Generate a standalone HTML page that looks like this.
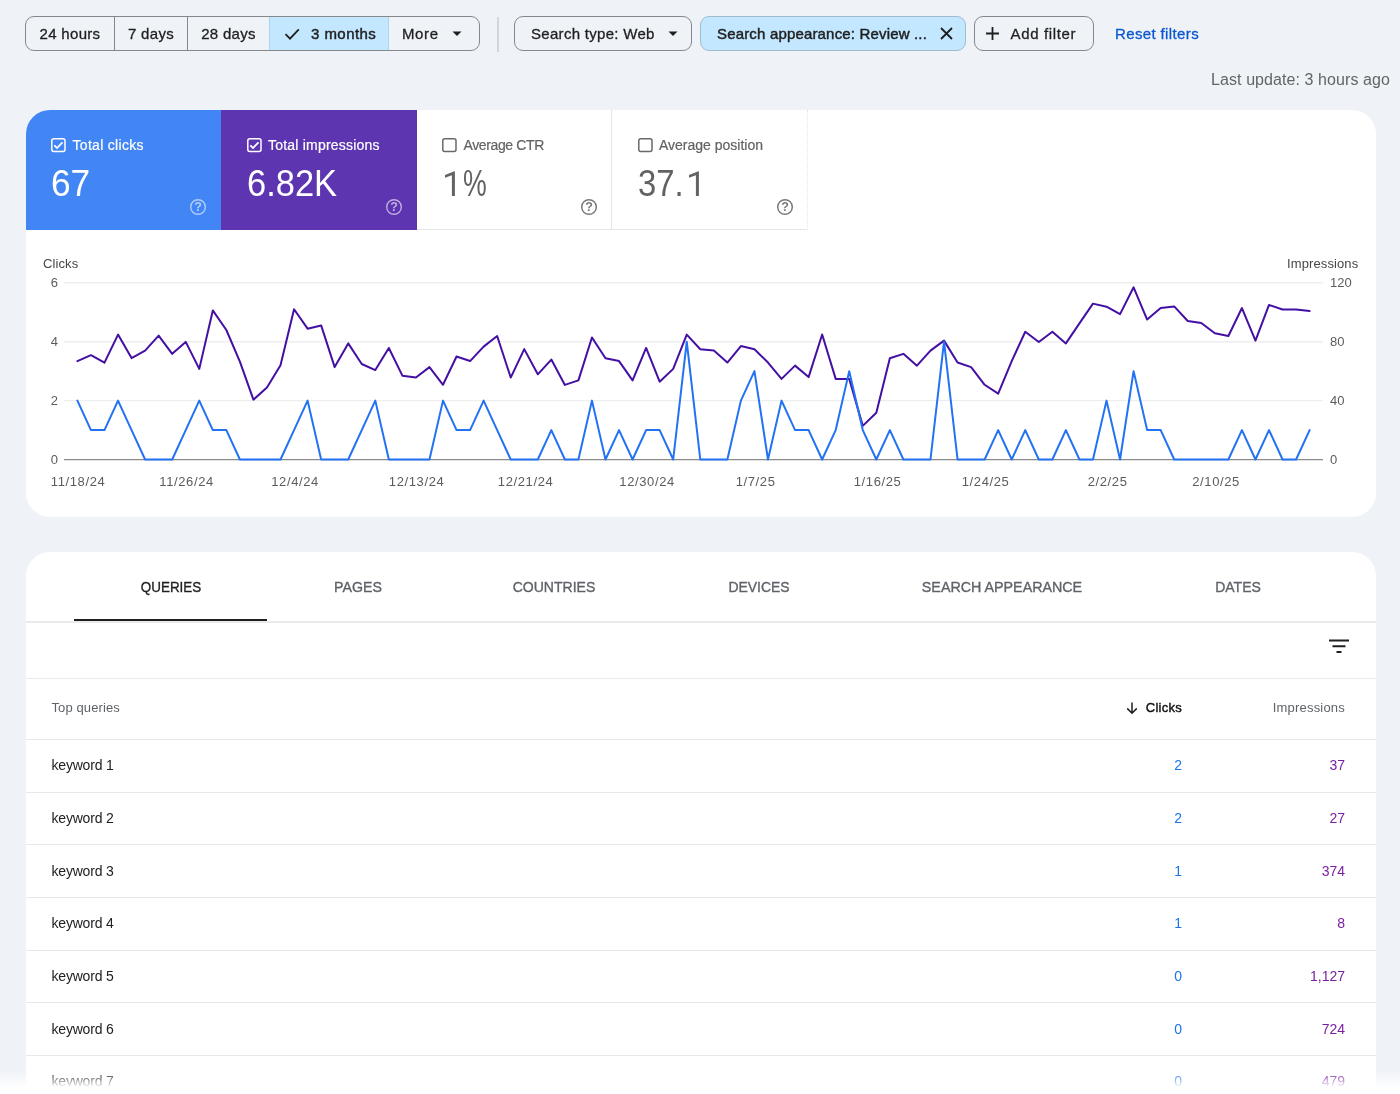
<!DOCTYPE html>
<html><head><meta charset="utf-8">
<style>
*{box-sizing:border-box;margin:0;padding:0}
html,body{width:1400px;height:1094px;overflow:hidden}
body{background:#eff3f8;font-family:"Liberation Sans",sans-serif;position:relative;color:#1f1f1f}
.abs{position:absolute}
.t{position:absolute;white-space:nowrap;line-height:1}
/* top bar */
.grp{position:absolute;left:25px;top:16px;width:454.8px;height:35px;border:1px solid #85888a;border-radius:9px;overflow:hidden;background:#eff3f8}
.seg{position:absolute;top:0;height:33px;border-left:1px solid #85888a;font-size:15px;line-height:33px;letter-spacing:.3px;-webkit-text-stroke:.3px #1f1f1f;text-align:center;color:#1f1f1f}
.chip{position:absolute;top:16px;height:35px;border:1px solid #85888a;border-radius:9px;font-size:15px;line-height:33px;letter-spacing:.3px;-webkit-text-stroke:.3px #1f1f1f;color:#1f1f1f;white-space:nowrap}
/* cards */
.card{position:absolute;left:25.5px;width:1350.5px;background:#fff;border-radius:24px;overflow:hidden}
.tile{position:absolute;top:0;height:120px;width:195.5px}
.tile .lbl{position:absolute;left:47px;top:26.5px;font-size:14px;line-height:16px;white-space:nowrap;-webkit-text-stroke:.2px currentColor}
.tile .num{position:absolute;left:25.5px;top:52.5px;font-size:36px;line-height:42px;white-space:nowrap;transform-origin:left center}
.ax{font-size:13px;fill:#5c5c5c;font-family:"Liberation Sans",sans-serif}
.ax .d{letter-spacing:.62px}
.tab{position:absolute;top:0;height:69px;line-height:69px;font-size:15px;color:#5f6368;text-align:center;white-space:nowrap;-webkit-text-stroke:.35px currentColor}
.row{position:absolute;left:0;width:1350.5px;border-top:1px solid #e6e8ea;height:53px}
.row .k{position:absolute;left:26px;top:17.2px;font-size:14px;line-height:16px;color:#202124;letter-spacing:-.2px}
.row .c{position:absolute;right:194px;top:17.2px;font-size:14px;line-height:16px;color:#1a73e8}
.row .i{position:absolute;right:31px;top:17.2px;font-size:14px;line-height:16px;color:#7b1fa2}
#w{position:absolute;left:0;top:0;width:1400px;height:1094px;will-change:transform;transform:translateZ(0)}
.gs{letter-spacing:.3px;-webkit-text-stroke:.3px #1f1f1f}
</style></head><body><div id="w">

<!-- date range group -->
<div class="grp">
  <div class="seg" style="left:0;width:88px;border-left:none">24 hours</div>
  <div class="seg" style="left:88px;width:73px">7 days</div>
  <div class="seg" style="left:161px;width:82px">28 days</div>
  <div class="seg" style="left:243px;width:118.5px;background:#c2e7ff;border-left-color:#a9d3ee;-webkit-text-stroke:.45px #1f1f1f;letter-spacing:.45px">
    <svg class="abs" style="left:14.3px;top:9px" width="17" height="15" viewBox="0 0 17 15"><path d="M1.5 8.2 L6 12.6 L14.8 3.4" fill="none" stroke="#1f1f1f" stroke-width="1.8"/></svg>
    <span style="position:absolute;left:41px;top:0">3 months</span>
  </div>
  <div class="seg" style="left:361.5px;width:93px;border-left-color:#a9d3ee">
    <span style="position:absolute;left:13.5px;top:0;letter-spacing:.6px">More</span>
    <svg class="abs" style="left:63.2px;top:14px" width="10" height="6" viewBox="0 0 10 6"><path d="M0.5 0.5 L9.5 0.5 L5 5 Z" fill="#1f1f1f"/></svg>
  </div>
</div>
<div class="abs" style="left:497px;top:17px;width:1.5px;height:35px;background:#d3d6d9"></div>

<div class="chip" style="left:514px;width:178px">
  <span style="position:absolute;left:16px;top:0">Search type: Web</span>
  <svg class="abs" style="left:153px;top:14px" width="10" height="6" viewBox="0 0 10 6"><path d="M0.5 0.5 L9.5 0.5 L5 5 Z" fill="#1f1f1f"/></svg>
</div>
<div class="chip" style="left:700px;width:266px;background:#c2e7ff;border-color:#9fbccf;-webkit-text-stroke:.45px #1f1f1f">
  <span style="position:absolute;left:16px;top:0;letter-spacing:.17px">Search appearance: Review ...</span>
  <svg class="abs" style="left:239px;top:10px" width="13" height="13" viewBox="0 0 13 13"><path d="M1 1 L12 12 M12 1 L1 12" fill="none" stroke="#1f1f1f" stroke-width="1.8"/></svg>
</div>
<div class="chip" style="left:973.5px;width:120px">
  <svg class="abs" style="left:10px;top:9px" width="15" height="15" viewBox="0 0 15 15"><path d="M7.5 1 V14 M1 7.5 H14" fill="none" stroke="#1f1f1f" stroke-width="1.8"/></svg>
  <span style="position:absolute;left:36px;top:0;letter-spacing:.65px">Add filter</span>
</div>
<div class="t" style="left:1115px;top:25.8px;font-size:15px;color:#0b57d0;letter-spacing:.37px;-webkit-text-stroke:.3px #0b57d0">Reset filters</div>
<div class="t" style="right:10px;top:71.5px;font-size:16px;color:#636466;letter-spacing:.08px">Last update: 3 hours ago</div>

<!-- CARD 1 -->
<div class="card" style="top:110px;height:407px">
  <div class="tile" style="left:0;background:#4285f4;color:#fff">
    <svg class="abs" style="left:25.5px;top:28px" width="15" height="15" viewBox="0 0 15 15"><rect x=".8" y=".8" width="13.2" height="12.8" rx="2" fill="none" stroke="#fff" stroke-width="1.5"/><path d="M3.3 7.3 L6 10 L11.5 4.3" fill="none" stroke="#fff" stroke-width="1.8"/></svg>
    <div class="lbl" style="letter-spacing:.3px">Total clicks</div>
    <div class="num" style="transform:scaleX(.98)">67</div>
    <svg class="abs" style="left:163.6px;top:88.4px" width="18" height="18" viewBox="0 0 18 18"><circle cx="9" cy="9" r="7.3" fill="none" stroke="#fff" stroke-opacity=".6" stroke-width="1.4"/><text x="9" y="13.4" font-size="12.5" font-weight="bold" text-anchor="middle" fill="#fff" fill-opacity=".6" font-family="Liberation Sans">?</text></svg>
  </div>
  <div class="tile" style="left:195.5px;background:#5e35b1;color:#fff">
    <svg class="abs" style="left:25.5px;top:28px" width="15" height="15" viewBox="0 0 15 15"><rect x=".8" y=".8" width="13.2" height="12.8" rx="2" fill="none" stroke="#fff" stroke-width="1.5"/><path d="M3.3 7.3 L6 10 L11.5 4.3" fill="none" stroke="#fff" stroke-width="1.8"/></svg>
    <div class="lbl" style="letter-spacing:.21px">Total impressions</div>
    <div class="num" style="transform:scaleX(.958)">6.82K</div>
    <svg class="abs" style="left:163.6px;top:88.4px" width="18" height="18" viewBox="0 0 18 18"><circle cx="9" cy="9" r="7.3" fill="none" stroke="#fff" stroke-opacity=".6" stroke-width="1.4"/><text x="9" y="13.4" font-size="12.5" font-weight="bold" text-anchor="middle" fill="#fff" fill-opacity=".6" font-family="Liberation Sans">?</text></svg>
  </div>
  <div class="tile" style="left:391px;background:#fff;color:#626262;border-right:1px solid #e4e6e8;border-bottom:1px solid #e4e6e8">
    <svg class="abs" style="left:25.5px;top:28px" width="15" height="15" viewBox="0 0 15 15"><rect x=".8" y=".8" width="13.2" height="12.8" rx="2" fill="none" stroke="#686868" stroke-width="1.5"/></svg>
    <div class="lbl" style="letter-spacing:-.38px">Average CTR</div>
    <svg class="abs" style="left:27.6px;top:61px" width="12" height="26" viewBox="0 0 12 26"><path d="M10.9 0.3 V25 H7.9 V4.2 L1 6.8 V4 L10.4 0.3 Z" fill="#636363"/></svg><div class="num" style="transform:scaleX(.74);left:46.6px">%</div>
    <svg class="abs" style="left:163.6px;top:88.4px" width="18" height="18" viewBox="0 0 18 18"><circle cx="9" cy="9" r="7.3" fill="none" stroke="#7a7a7a" stroke-width="1.5"/><text x="9" y="13.4" font-size="12.5" font-weight="bold" text-anchor="middle" fill="#7a7a7a" font-family="Liberation Sans">?</text></svg>
  </div>
  <div class="tile" style="left:586.5px;background:#fff;color:#626262;border-right:1px dotted #e4e6e8;border-bottom:1px solid #e4e6e8">
    <svg class="abs" style="left:25.5px;top:28px" width="15" height="15" viewBox="0 0 15 15"><rect x=".8" y=".8" width="13.2" height="12.8" rx="2" fill="none" stroke="#686868" stroke-width="1.5"/></svg>
    <div class="lbl">Average position</div>
    <div class="num" style="transform:scaleX(.912)">37.</div><svg class="abs" style="left:75.8px;top:61px" width="12" height="26" viewBox="0 0 12 26"><path d="M10.9 0.3 V25 H7.9 V4.2 L1 6.8 V4 L10.4 0.3 Z" fill="#636363"/></svg>
    <svg class="abs" style="left:163.6px;top:88.4px" width="18" height="18" viewBox="0 0 18 18"><circle cx="9" cy="9" r="7.3" fill="none" stroke="#7a7a7a" stroke-width="1.5"/><text x="9" y="13.4" font-size="12.5" font-weight="bold" text-anchor="middle" fill="#7a7a7a" font-family="Liberation Sans">?</text></svg>
  </div>
</div>

<!-- chart overlay in page coords -->
<svg class="abs" style="left:0;top:0" width="1400" height="520" viewBox="0 0 1400 520">
  <g stroke="#eeeeee" stroke-width="1.4">
    <line x1="64" x2="1323" y1="282.8" y2="282.8"/>
    <line x1="64" x2="1323" y1="341.7" y2="341.7"/>
    <line x1="64" x2="1323" y1="400.6" y2="400.6"/>
  </g>
  <line x1="64" x2="1323" y1="459.6" y2="459.6" stroke="#8a8a8a" stroke-width="1.2"/>
  <polyline fill="none" stroke="#4410a3" stroke-width="2" stroke-linejoin="round" stroke-linecap="round" points="77.40,361.21 90.94,355.17 104.48,362.68 118.02,334.56 131.56,358.12 145.11,350.61 158.65,335.59 172.19,353.85 185.73,341.92 199.27,368.87 212.81,310.41 226.35,329.99 239.89,361.65 253.43,399.64 266.97,387.42 280.51,365.19 294.06,309.23 307.60,328.67 321.14,325.43 334.68,367.10 348.22,343.39 361.76,364.01 375.30,370.05 388.84,347.96 402.38,375.64 415.93,377.56 429.47,367.10 443.01,384.77 456.55,356.50 470.09,361.06 483.63,346.63 497.17,336.03 510.71,377.56 524.25,349.14 537.79,374.32 551.34,359.59 564.88,384.92 578.42,380.35 591.96,337.50 605.50,358.27 619.04,361.06 632.58,380.35 646.12,347.96 659.66,381.68 673.20,368.87 686.75,334.56 700.29,349.28 713.83,350.61 727.37,362.54 740.91,346.04 754.45,349.28 767.99,362.54 781.53,378.88 795.07,365.63 808.61,377.11 822.15,334.56 835.70,378.88 849.24,378.88 862.78,425.85 876.32,412.75 889.86,358.27 903.40,353.85 916.94,365.63 930.48,350.61 944.02,340.60 957.57,362.54 971.11,367.10 984.65,384.77 998.19,393.61 1011.73,361.06 1025.27,331.76 1038.81,342.07 1052.35,331.76 1065.89,343.39 1079.43,323.37 1092.98,303.64 1106.52,306.73 1120.06,314.09 1133.60,287.29 1147.14,319.54 1160.68,308.05 1174.22,306.43 1187.76,321.01 1201.30,322.93 1214.84,333.23 1228.39,336.03 1241.93,308.05 1255.47,340.60 1269.01,304.96 1282.55,309.53 1296.09,309.53 1309.63,311.00"/>
  <polyline fill="none" stroke="#2272f3" stroke-width="2" stroke-linejoin="round" stroke-linecap="round" points="77.40,400.60 90.94,430.05 104.48,430.05 118.02,400.60 131.56,430.05 145.11,459.50 158.65,459.50 172.19,459.50 185.73,430.05 199.27,400.60 212.81,430.05 226.35,430.05 239.89,459.50 253.43,459.50 266.97,459.50 280.51,459.50 294.06,430.05 307.60,400.60 321.14,459.50 334.68,459.50 348.22,459.50 361.76,430.05 375.30,400.60 388.84,459.50 402.38,459.50 415.93,459.50 429.47,459.50 443.01,400.60 456.55,430.05 470.09,430.05 483.63,400.60 497.17,430.05 510.71,459.50 524.25,459.50 537.79,459.50 551.34,430.05 564.88,459.50 578.42,459.50 591.96,400.60 605.50,459.50 619.04,430.05 632.58,459.50 646.12,430.05 659.66,430.05 673.20,459.50 686.75,341.70 700.29,459.50 713.83,459.50 727.37,459.50 740.91,400.60 754.45,371.15 767.99,459.50 781.53,400.60 795.07,430.05 808.61,430.05 822.15,459.50 835.70,430.05 849.24,371.15 862.78,430.05 876.32,459.50 889.86,430.05 903.40,459.50 916.94,459.50 930.48,459.50 944.02,341.70 957.57,459.50 971.11,459.50 984.65,459.50 998.19,430.05 1011.73,459.50 1025.27,430.05 1038.81,459.50 1052.35,459.50 1065.89,430.05 1079.43,459.50 1092.98,459.50 1106.52,400.60 1120.06,459.50 1133.60,371.15 1147.14,430.05 1160.68,430.05 1174.22,459.50 1187.76,459.50 1201.30,459.50 1214.84,459.50 1228.39,459.50 1241.93,430.05 1255.47,459.50 1269.01,430.05 1282.55,459.50 1296.09,459.50 1309.63,430.05"/>
  <g class="ax">
    <text x="43" y="268" fill="#474747" letter-spacing=".1">Clicks</text>
    <text x="1358.3" y="268" text-anchor="end" fill="#474747" letter-spacing=".1">Impressions</text>
    <text x="58" y="287.4" text-anchor="end">6</text>
    <text x="58" y="346.3" text-anchor="end">4</text>
    <text x="58" y="405.2" text-anchor="end">2</text>
    <text x="58" y="464.2" text-anchor="end">0</text>
    <text x="1330" y="287.4">120</text>
    <text x="1330" y="346.3">80</text>
    <text x="1330" y="405.2">40</text>
    <text x="1330" y="464.2">0</text>
    <g text-anchor="middle" class="d" transform="translate(.6,0)">
      <text x="77.5" y="486.3">11/18/24</text>
      <text x="186" y="486.3">11/26/24</text>
      <text x="294.5" y="486.3">12/4/24</text>
      <text x="416" y="486.3">12/13/24</text>
      <text x="525" y="486.3">12/21/24</text>
      <text x="646.5" y="486.3">12/30/24</text>
      <text x="755" y="486.3">1/7/25</text>
      <text x="877" y="486.3">1/16/25</text>
      <text x="985" y="486.3">1/24/25</text>
      <text x="1107" y="486.3">2/2/25</text>
      <text x="1215.5" y="486.3">2/10/25</text>
    </g>
  </g>
</svg>

<!-- CARD 2 -->
<div class="card" style="top:552px;height:560px">
  <div class="tab" style="left:145px;color:#1f1f1f;transform:translateX(-50%) scaleX(.895)">QUERIES</div>
  <div class="tab" style="left:332px;transform:translateX(-50%) scaleX(.945)">PAGES</div>
  <div class="tab" style="left:528.6px;transform:translateX(-50%) scaleX(.935)">COUNTRIES</div>
  <div class="tab" style="left:733.5px;transform:translateX(-50%) scaleX(.93)">DEVICES</div>
  <div class="tab" style="left:976.5px;transform:translateX(-50%) scaleX(.952)">SEARCH APPEARANCE</div>
  <div class="tab" style="left:1212px;transform:translateX(-50%) scaleX(.935)">DATES</div>
  <div class="abs" style="left:48.5px;top:67px;width:193px;height:2.5px;background:#1f1f1f"></div>
  <div class="abs" style="left:0;top:69px;width:1350.5px;height:1.5px;background:#e8eaed"></div>
  <!-- filter icon -->
  <svg class="abs" style="left:1302px;top:87px" width="22" height="16" viewBox="0 0 22 16"><path d="M1 1.5 H21 M4.5 7.2 H17.5 M8.5 13 H13.5" stroke="#1f1f1f" stroke-width="2" fill="none"/></svg>
  <div class="abs" style="left:0;top:125.5px;width:1350.5px;height:1.5px;background:#e8eaed"></div>
  <div class="t" style="left:26px;top:149px;font-size:13px;letter-spacing:.1px;color:#5f6368">Top queries</div>
  <svg class="abs" style="left:1099px;top:149px" width="14" height="14" viewBox="0 0 14 14"><path d="M7 1.5 V12 M2.2 7.4 L7 12.2 L11.8 7.4" fill="none" stroke="#1f1f1f" stroke-width="1.5"/></svg>
  <div class="t" style="right:194px;top:149px;font-size:13px;letter-spacing:.25px;color:#111;-webkit-text-stroke:.4px #111">Clicks</div>
  <div class="t" style="right:31px;top:149px;font-size:13px;letter-spacing:.2px;color:#5f6368">Impressions</div>
  <div class="row" style="top:187.00px"><div class="k">keyword 1</div><div class="c">2</div><div class="i">37</div></div>
  <div class="row" style="top:239.67px"><div class="k">keyword 2</div><div class="c">2</div><div class="i">27</div></div>
  <div class="row" style="top:292.34px"><div class="k">keyword 3</div><div class="c">1</div><div class="i">374</div></div>
  <div class="row" style="top:345.01px"><div class="k">keyword 4</div><div class="c">1</div><div class="i">8</div></div>
  <div class="row" style="top:397.68px"><div class="k">keyword 5</div><div class="c">0</div><div class="i">1,127</div></div>
  <div class="row" style="top:450.35px"><div class="k">keyword 6</div><div class="c">0</div><div class="i">724</div></div>
  <div class="row" style="top:503.02px"><div class="k">keyword 7</div><div class="c">0</div><div class="i">479</div></div>
  
</div>
<!-- bottom fade -->
<div class="abs" style="left:0;top:1069px;width:1400px;height:25px;background:linear-gradient(to bottom,rgba(255,255,255,0) 0%,rgba(255,255,255,.4) 36%,rgba(255,255,255,1) 74%,rgba(255,255,255,1) 100%)"></div>
</div></body></html>
